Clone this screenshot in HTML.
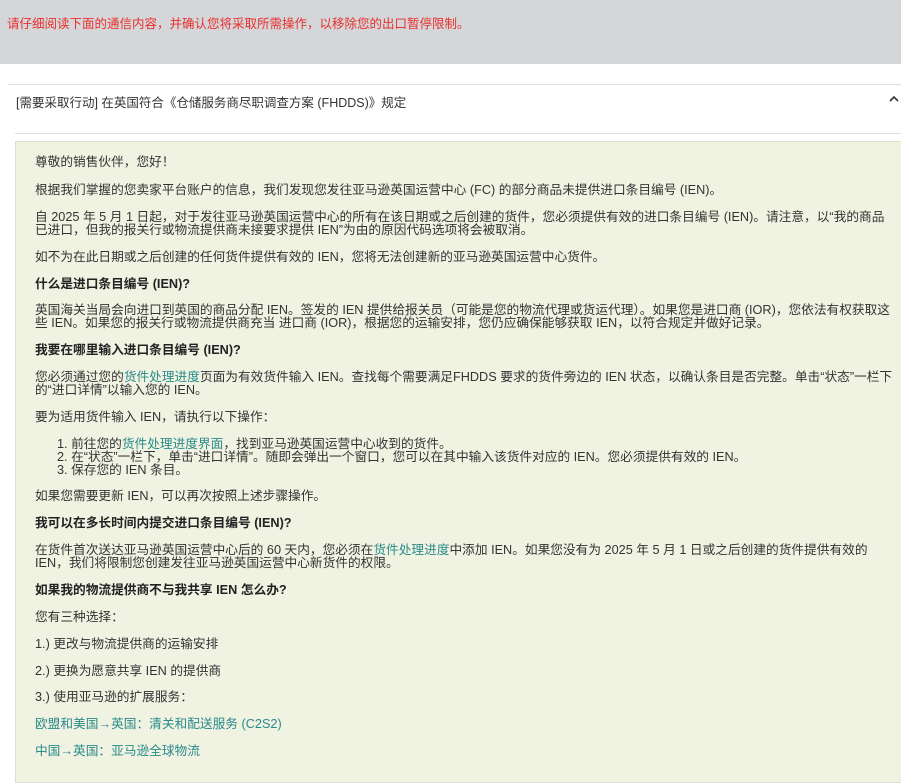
<!DOCTYPE html>
<html><head><meta charset="utf-8"><style>
body{margin:0;width:901px;height:769px;overflow:hidden;background:#fff;font-family:"Liberation Sans","Noto Sans CJK SC",sans-serif;font-size:12.7px;color:#333;position:relative}
.top{position:absolute;left:0;top:0;width:901px;height:64px;background:#d5d6d9}
.red{position:absolute;left:7px;top:13px;color:#e8302c;font-size:12.5px}
.l1{position:absolute;left:8px;right:0;top:84px;border-top:1px solid #ddd}
.l2{position:absolute;left:15px;right:0;top:133px;border-top:1px solid #ddd}
.hd{position:absolute;left:16px;top:92px;font-size:12.5px;color:#333}
.chev{position:absolute;left:889px;top:95px}
.box{position:absolute;left:15px;top:141px;width:900px;height:640px;background:#f0f3e2;border:1px solid #dde0d0}
.t{position:absolute;left:35px;line-height:13px;white-space:nowrap;color:#333}
.b{font-weight:bold;color:#222}
a{color:#2a8a8a;text-decoration:none}
</style></head><body>
<div class="top"></div>
<div class="red">请仔细阅读下面的通信内容，并确认您将采取所需操作，以移除您的出口暂停限制。</div>
<div class="l1"></div>
<div class="hd">[需要采取行动] 在英国符合《仓储服务商尽职调查方案 (FHDDS)》规定</div>
<svg class="chev" width="10" height="8" viewBox="0 0 10 8"><path d="M1 6 L5 2 L9 6" fill="none" stroke="#333" stroke-width="1.6"/></svg>
<div class="l2"></div>
<div class="box"></div>
<div class="t" style="top:156px">尊敬的销售伙伴，您好！</div>
<div class="t" style="top:184px">根据我们掌握的您卖家平台账户的信息，我们发现您发往亚马逊英国运营中心 (FC) 的部分商品未提供进口条目编号 (IEN)。</div>
<div class="t" style="top:211px">自 2025 年 5 月 1 日起，对于发往亚马逊英国运营中心的所有在该日期或之后创建的货件，您必须提供有效的进口条目编号 (IEN)。请注意，以“我的商品<br>已进口，但我的报关行或物流提供商未接要求提供 IEN”为由的原因代码选项将会被取消。</div>
<div class="t" style="top:251px">如不为在此日期或之后创建的任何货件提供有效的 IEN，您将无法创建新的亚马逊英国运营中心货件。</div>
<div class="t b" style="top:278px">什么是进口条目编号 (IEN)?</div>
<div class="t" style="top:304px">英国海关当局会向进口到英国的商品分配 IEN。签发的 IEN 提供给报关员（可能是您的物流代理或货运代理）。如果您是进口商 (IOR)，您依法有权获取这<br>些 IEN。如果您的报关行或物流提供商充当 进口商 (IOR)，根据您的运输安排，您仍应确保能够获取 IEN，以符合规定并做好记录。</div>
<div class="t b" style="top:344px">我要在哪里输入进口条目编号 (IEN)?</div>
<div class="t" style="top:371px">您必须通过您的<a>货件处理进度</a>页面为有效货件输入 IEN。查找每个需要满足FHDDS 要求的货件旁边的 IEN 状态，以确认条目是否完整。单击“状态”一栏下<br>的“进口详情”以输入您的 IEN。</div>
<div class="t" style="top:411px">要为适用货件输入 IEN，请执行以下操作：</div>
<div class="t" style="top:438px;left:57px">1. 前往您的<a>货件处理进度界面</a>，找到亚马逊英国运营中心收到的货件。<br>2. 在“状态”一栏下，单击“进口详情”。随即会弹出一个窗口，您可以在其中输入该货件对应的 IEN。您必须提供有效的 IEN。<br>3. 保存您的 IEN 条目。</div>
<div class="t" style="top:490px">如果您需要更新 IEN，可以再次按照上述步骤操作。</div>
<div class="t b" style="top:517px">我可以在多长时间内提交进口条目编号 (IEN)?</div>
<div class="t" style="top:544px">在货件首次送达亚马逊英国运营中心后的 60 天内，您必须在<a>货件处理进度</a>中添加 IEN。如果您没有为 2025 年 5 月 1 日或之后创建的货件提供有效的<br>IEN，我们将限制您创建发往亚马逊英国运营中心新货件的权限。</div>
<div class="t b" style="top:584px">如果我的物流提供商不与我共享 IEN 怎么办?</div>
<div class="t" style="top:611px">您有三种选择：</div>
<div class="t" style="top:638px">1.) 更改与物流提供商的运输安排</div>
<div class="t" style="top:665px">2.) 更换为愿意共享 IEN 的提供商</div>
<div class="t" style="top:691px">3.) 使用亚马逊的扩展服务：</div>
<div class="t" style="top:718px"><a>欧盟和美国→英国：清关和配送服务 (C2S2)</a></div>
<div class="t" style="top:745px"><a>中国→英国：亚马逊全球物流</a></div>
</body></html>
